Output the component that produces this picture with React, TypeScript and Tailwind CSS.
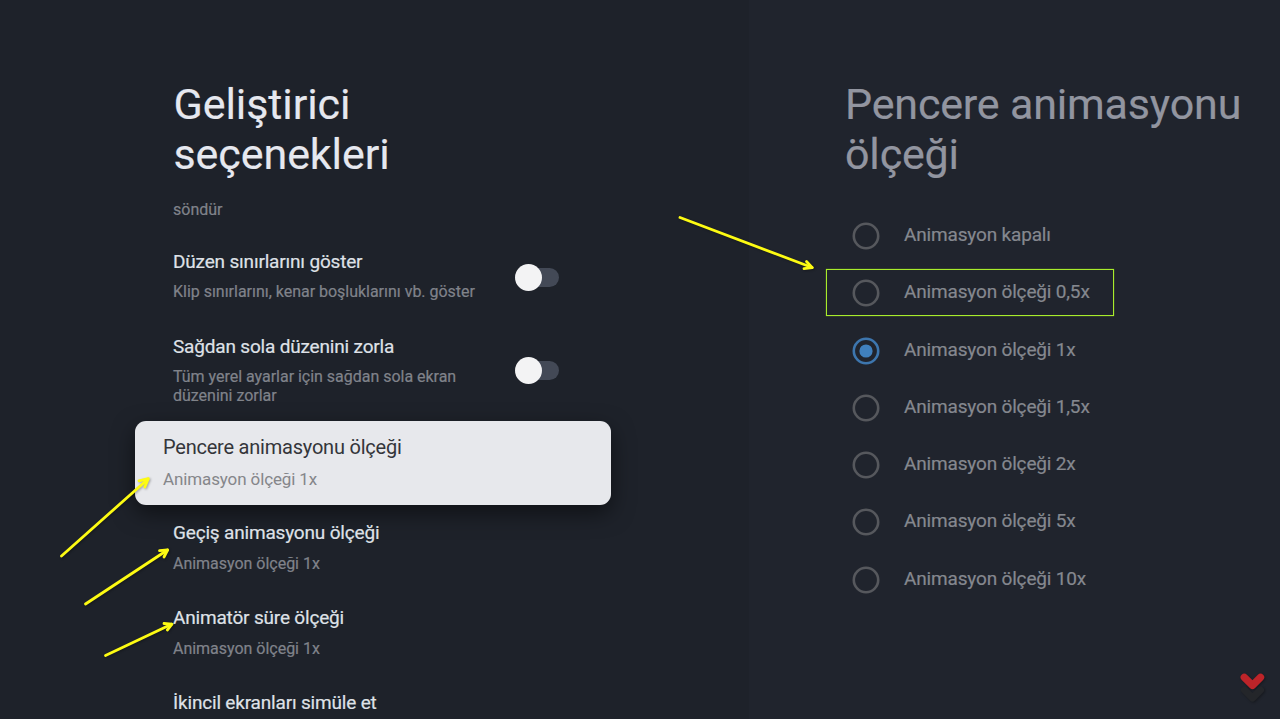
type Arrow = { shaft: string; head: string };

const scales = [
  { label: "Animasyon kapalı" },
  { label: "Animasyon ölçeği 0,5x", marked: true },
  { label: "Animasyon ölçeği 1x", checked: true },
  { label: "Animasyon ölçeği 1,5x" },
  { label: "Animasyon ölçeği 2x" },
  { label: "Animasyon ölçeği 5x" },
  { label: "Animasyon ölçeği 10x" },
];

const arrows: Arrow[] = [
  { shaft: "M680 217.5 L812 267.5", head: "M806.5 261.5 L812.3 267.7 L804 268.7" },
  { shaft: "M61.5 556 L148 479", head: "M139 480.8 L148.3 478.6 L144.8 487" },
  { shaft: "M85.5 604 L167.5 550", head: "M159.5 550.7 L167.6 550 L164 557" },
  { shaft: "M105.5 655.5 L171.5 624.3", head: "M164 623.5 L172 624.2 L167.3 630" },
];

function Toggle() {
  return (
    <div className="flex h-[28px] w-[44px] shrink-0 items-center">
      <div className="z-10 size-[27px] shrink-0 rounded-full bg-[#f3f3f4]" />
      <div className="-ml-[20px] h-[19px] w-[36.5px] shrink-0 rounded-full bg-[#434956]" />
    </div>
  );
}

function Radio({ checked }: { checked?: boolean }) {
  return (
    <svg className="size-[28px] shrink-0" viewBox="0 0 28 28" fill="none">
      <circle cx="14" cy="14" r="12.2" stroke={checked ? "#3d76ae" : "#56585d"} strokeWidth="2.6" />
      {checked && <circle cx="14" cy="14" r="6.6" fill="#4080bd" />}
    </svg>
  );
}

function Option({ title, detail, tight }: { title: string; detail?: string; tight?: boolean }) {
  return (
    <div className={tight ? "flex h-[85px] flex-col gap-[8px] whitespace-nowrap" : "flex h-[85px] flex-col gap-[9px] whitespace-nowrap"}>
      <div className="text-[19px] leading-6 tracking-[-0.18px] text-[#dfe1e7] [-webkit-text-stroke:0.2px_#dfe1e7]">{title}</div>
      {detail && (
        <div className="text-[16px] leading-[19px] tracking-[-0.02px] text-[#80838a] [-webkit-text-stroke:0.2px_#80838a]">
          {detail}
        </div>
      )}
    </div>
  );
}

export default function App() {
  return (
    <div className="relative flex h-[719px] w-[1280px] overflow-hidden bg-[#1e222a] font-[Roboto,sans-serif]">
      <section className="w-[749px] shrink-0 pt-[79px]">
        <h1 className="pl-[173.5px] text-[43px] leading-[50px] tracking-[-0.08px] text-[#e6e8ef] [-webkit-text-stroke:0.15px_#e6e8ef]">
          Geliştirici
          <br />
          seçenekleri
        </h1>
        <p className="mt-[21px] pl-[173px] text-[16px] leading-[19px] text-[#80838a] [-webkit-text-stroke:0.2px_#80838a]">söndür</p>
        <div className="mt-[31px] flex w-[559px] justify-between pl-[173px]">
          <Option title="Düzen sınırlarını göster" detail="Klip sınırlarını, kenar boşluklarını vb. göster" tight />
          <div className="pt-[13px]">
            <Toggle />
          </div>
        </div>
        <div className="flex h-[86px] w-[559px] justify-between pl-[173px]">
          <div className="flex flex-col gap-[9px] whitespace-nowrap">
            <div className="text-[19px] leading-6 tracking-[-0.18px] text-[#dfe1e7] [-webkit-text-stroke:0.2px_#dfe1e7]">
              Sağdan sola düzenini zorla
            </div>
            <div className="text-[16px] leading-[18.5px] tracking-[-0.02px] text-[#80838a] [-webkit-text-stroke:0.2px_#80838a]">
              Tüm yerel ayarlar için sağdan sola ekran
              <br />
              düzenini zorlar
            </div>
          </div>
          <div className="pt-[21px]">
            <Toggle />
          </div>
        </div>
        <div className="ml-[135px] flex h-[84px] w-[476px] flex-col gap-[11px] rounded-[11px] bg-[#e7e8ec] pt-[14px] pl-[28px] whitespace-nowrap shadow-[0_8px_22px_rgba(0,0,0,0.5)]">
          <div className="text-[20px] leading-6 tracking-[-0.22px] text-[#34353a]">Pencere animasyonu ölçeği</div>
          <div className="text-[17px] leading-[19px] tracking-[-0.12px] text-[#85868a]">Animasyon ölçeği 1x</div>
        </div>
        <div className="mt-[16px] pl-[173px]">
          <Option title="Geçiş animasyonu ölçeği" detail="Animasyon ölçeği 1x" />
          <Option title="Animatör süre ölçeği" detail="Animasyon ölçeği 1x" />
          <Option title="İkincil ekranları simüle et" />
        </div>
      </section>

      <section className="flex-1 bg-[#20242d] pt-[79px] pl-[77px]">
        <h2 className="pl-[19px] text-[43px] leading-[50px] tracking-[-0.17px] whitespace-nowrap text-[#9295a0] [-webkit-text-stroke:0.2px_#9295a0]">
          Pencere animasyonu
          <br />
          ölçeği
        </h2>
        <ul className="mt-[33px] flex flex-col gap-[10.3px]">
          {scales.map(({ label, marked, checked }) => (
            <li
              key={label}
              className={
                marked
                  ? "flex h-[47px] w-[288px] items-center gap-[24px] border border-[#a8ec2c] pl-[25px] shadow-[0_0_1px_#7fb31c]"
                  : "flex h-[47px] w-[288px] items-center gap-[24px] border border-transparent pl-[25px]"
              }
            >
              <div className="pt-[1px]">
                <Radio checked={checked} />
              </div>
              <span className="-mt-[1px] text-[19px] leading-6 tracking-[-0.17px] whitespace-nowrap text-[#85888f] [-webkit-text-stroke:0.2px_#85888f]">
                {label}
              </span>
            </li>
          ))}
        </ul>
      </section>

      <svg
        className="pointer-events-none absolute inset-0 z-20 drop-shadow-[1px_1px_1px_rgba(0,0,0,0.3)]"
        width="1280"
        height="719"
        viewBox="0 0 1280 719"
        fill="none"
        strokeLinecap="round"
        strokeLinejoin="round"
      >
        {arrows.map((a) => (
          <g key={a.shaft} stroke="#fdfb13" strokeWidth="2.8">
            <path d={a.shaft} />
            <path d={a.head} />
          </g>
        ))}
        <path d="M1244.5 690 L1252.5 698 L1260.5 690" stroke="#24262a" strokeWidth="7" />
        <path d="M1244.3 677.3 L1252.5 685.3 L1260.5 677.3" stroke="#bd2429" strokeWidth="7.4" />
      </svg>
    </div>
  );
}
